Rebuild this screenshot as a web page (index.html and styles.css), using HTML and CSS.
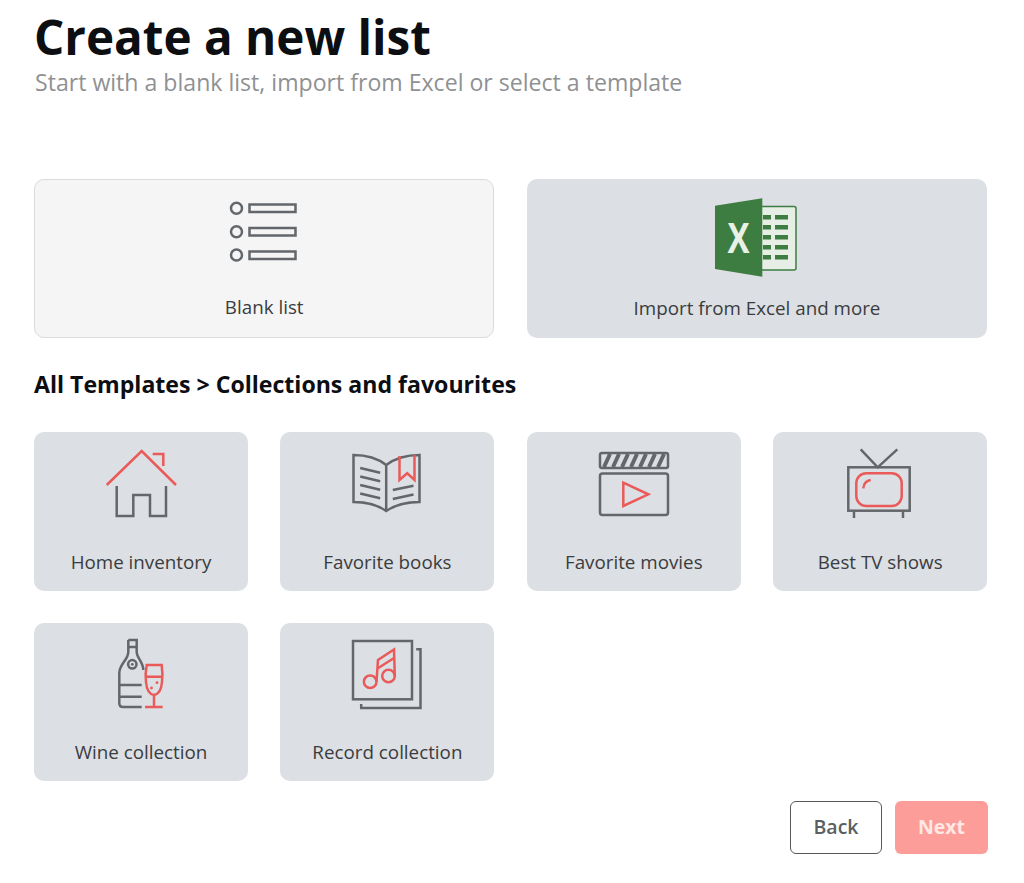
FILE: index.html
```html
<!DOCTYPE html>
<html>
<head>
<title>Create a new list</title>
<link rel="stylesheet" href="styles.css">
</head>
<body>
<h1>Create a new list</h1>
<p class="sub">Start with a blank list, import from Excel or select a template</p>

<div class="grid top">
	<div class="card wide blank">
		<svg class="big list" viewBox="-0.5 6 130 100">
			<g class="gr">
				<circle cx="37" cy="28.3" r="5.5"/>
				<circle cx="37" cy="51.7" r="5.5"/>
				<circle cx="37" cy="75" r="5.5"/>
				<rect x="50" y="24.5" width="46" height="7.5"/>
				<rect x="50" y="48" width="46" height="7.5"/>
				<rect x="50" y="71.5" width="46" height="7.5"/>
			</g>
		</svg>
		<span class="label">Blank list</span>
	</div>
	<div class="card wide">
		<svg class="big" viewBox="0 1 115 100">
			<path class="sheet" d="M60 21.5H95a2 2 0 0 1 2 2V83a2 2 0 0 1-2 2H60z"/>
			<g class="cells">
				<rect x="64" y="30" width="8" height="4.5"/><rect x="76" y="30" width="13" height="4.5"/>
				<rect x="64" y="40" width="8" height="4.5"/><rect x="76" y="40" width="13" height="4.5"/>
				<rect x="64" y="50" width="8" height="4.5"/><rect x="76" y="50" width="13" height="4.5"/>
				<rect x="64" y="60" width="8" height="4.5"/><rect x="76" y="60" width="13" height="4.5"/>
				<rect x="64" y="70" width="8" height="4.5"/><rect x="76" y="70" width="13" height="4.5"/>
			</g>
			<polygon class="cover" points="16,20.7 63.3,13.3 63.3,91.7 16,84"/>
			<text class="xl" x="28.5" y="68" textLength="22" lengthAdjust="spacingAndGlyphs">X</text>
		</svg>
		<span class="label">Import from Excel and more</span>
	</div>
</div>

<h2>All Templates &gt; Collections and favourites</h2>

<div class="grid">
	<div class="card">
		<svg class="small" viewBox="1 -1 100 85">
			<path class="gr" d="M26.7 46V76H43.3V55H60V76H76V46"/>
			<path class="rd" d="M16.7 45L51.7 11L86 45M62.7 14H73.3V26"/>
		</svg>
		<span class="label">Home inventory</span>
	</div>
	<div class="card">
		<svg class="small" viewBox="-2.5 -1 100 85">
			<path class="gr" d="M14 15Q34 15 46.7 25Q60 15 80 15V62Q60 62 46.7 71Q34 62 14 62zM46.7 25V71"/>
			<path class="gr" d="M20.7 28L40.7 32.7M20.7 36.5L40.7 41.2M20.7 45L40.7 49.7M20.7 53.5L40.7 58.2M53.3 50L74 45.7M53.3 59L74 54.5"/>
			<path class="rd" d="M60 16V40L67.7 33.3L75 40V15"/>
		</svg>
		<span class="label">Favorite books</span>
	</div>
	<div class="card">
		<svg class="small" viewBox="-1 -1 100 85">
			<rect class="gr" x="15" y="13" width="68" height="15" rx="2"/>
			<path class="gr thick" d="M19 27L25 14M28 27L34 14M37 27L43 14M46 27L52 14M55 27L61 14M64 27L70 14M73 27L79 14"/>
			<rect class="gr" x="15" y="33.5" width="68" height="41.5" rx="2.5"/>
			<polygon class="rd" points="38.3,42.7 63.3,54.3 38.3,66"/>
		</svg>
		<span class="label">Favorite movies</span>
	</div>
	<div class="card">
		<svg class="small" viewBox="1 -1 100 85">
			<path class="gr" d="M31.7 9.3L48.7 27.3L68.3 9.3M25 70.7V78M74 70.7V78"/>
			<rect class="gr" x="19.3" y="27.3" width="61.4" height="43.4"/>
			<rect class="rd" x="27.3" y="33.3" width="45.4" height="32.7" rx="10"/>
			<path class="rd" d="M34.3 48.3Q35 41 41.7 40"/>
		</svg>
		<span class="label">Best TV shows</span>
	</div>
	<div class="card">
		<svg class="small wine" viewBox="1 0 80 85">
			<path class="gr" d="M28.3 10H36.7V22C36.7 28 43.3 32 43.3 40M28.3 10V22C28.3 30 19.3 34 19.3 43V73Q19.3 77 23 77H41.7M20 55H41.7M20 66.7H41.7"/>
			<path class="gr" d="M28.3 17H36.7"/>
			<circle class="gr" cx="32.3" cy="34.3" r="4.2"/>
			<circle class="dot" cx="32.3" cy="34.3" r="1.4"/>
			<path class="rd" d="M46.7 35H61.7Q63 44 62 52Q61 64 54 65Q47 64 46 52Q45 44 46.7 35zM46 46.7H62.5M54 65V77M45 77H62.7"/>
			<circle class="rdot" cx="51.5" cy="58" r="1.4"/>
			<circle class="rdot" cx="57" cy="52.7" r="1.4"/>
		</svg>
		<span class="label">Wine collection</span>
	</div>
	<div class="card">
		<svg class="small record" viewBox="0.5 0 95 85">
			<rect class="gr" x="13.5" y="11" width="59" height="58.3"/>
			<path class="gr" d="M76.7 19.3H81V78H21.7V74"/>
			<circle class="rd" cx="30.7" cy="51.7" r="6.3"/>
			<circle class="rd" cx="49" cy="46" r="6.3"/>
			<path class="rd" d="M37 51.7L38.5 30L54.5 19.5L55.3 46M38 38.5L54.5 28"/>
		</svg>
		<span class="label">Record collection</span>
	</div>
</div>

<div class="buttons">
	<button class="btn back">Back</button>
	<button class="btn next">Next</button>
</div>
</body>
</html>
```

FILE: styles.css
```css
body {
	margin: 0;
	padding: 0 36px 29px 34px;
	background-color: #fff;
	font-family: "Open Sans", "Liberation Sans", sans-serif;
	color: #333;
}

h1 {
	margin: 0;
	padding-top: 6px;
	font-size: 47.6px;
	line-height: 62px;
	font-weight: 700;
	color: #0c0e12;
}

.sub {
	margin: 0;
	padding-left: 1px;
	font-size: 23.1px;
	line-height: 28px;
	color: #8f9193;
}

h2 {
	margin: 0;
	font-size: 23.1px;
	line-height: 30px;
	font-weight: 700;
	color: #0c0e12;
	padding: 31px 0 33.5px;
}

.grid {
	display: grid;
	grid-template-columns: repeat(4, 214px);
	column-gap: 32.4px;
	row-gap: 32px;
}

.top {
	margin-top: 83px;
}

.card {
	height: 158.5px;
	box-sizing: border-box;
	padding-top: 7px;
	display: flex;
	flex-direction: column;
	align-items: center;
	background-color: #dcdfe3;
	border-radius: 10px;
	overflow: hidden;
}

.wide {
	grid-column: span 2;
}

.wide .label {
	margin-bottom: 17px;
}

.blank {
	background-color: #f5f5f5;
	border: 1px solid #d9dcd9;
	padding-top: 6px;
}

.big {
	width: 115px;
	height: 100px;
	flex: none;
}

.big.list {
	width: 130px;
}

.small {
	width: 100px;
	height: 85px;
	flex: none;
}

.small.wine {
	width: 80px;
}

.small.record {
	width: 95px;
}

.label {
	margin-top: auto;
	margin-bottom: 16px;
	font-size: 18.8px;
	line-height: 26px;
	color: #3a3c3e;
}

.gr, .gr * {
	fill: none;
	stroke: #63676b;
	stroke-width: 2.5;
}

.gr.thick {
	stroke-width: 4;
}

.rd {
	fill: none;
	stroke: #ea5a58;
	stroke-width: 2.5;
}

.dot {
	fill: #63676b;
}

.rdot {
	fill: #ea5a58;
}

.sheet {
	fill: #e6eee6;
	stroke: #3d7d41;
	stroke-width: 1.5;
}

.cells {
	fill: #3d7d41;
}

.cover {
	fill: #3d7d41;
}

.xl {
	font-family: "Open Sans", sans-serif;
	font-size: 42px;
	font-weight: 700;
	fill: #e9f0e6;
}

.buttons {
	display: flex;
	justify-content: flex-end;
	gap: 13px;
	margin-top: 20px;
}

.btn {
	width: 93px;
	height: 53px;
	padding: 0 0 2px;
	border-radius: 6px;
	font-family: inherit;
	font-size: 19.5px;
	font-weight: 600;
}

.back {
	width: 92px;
	background-color: #fff;
	border: 1.5px solid #55595c;
	color: #5b5f62;
}

.next {
	background-color: #fc9d99;
	border: 0;
	color: #fde8e5;
	font-weight: 700;
}
```
